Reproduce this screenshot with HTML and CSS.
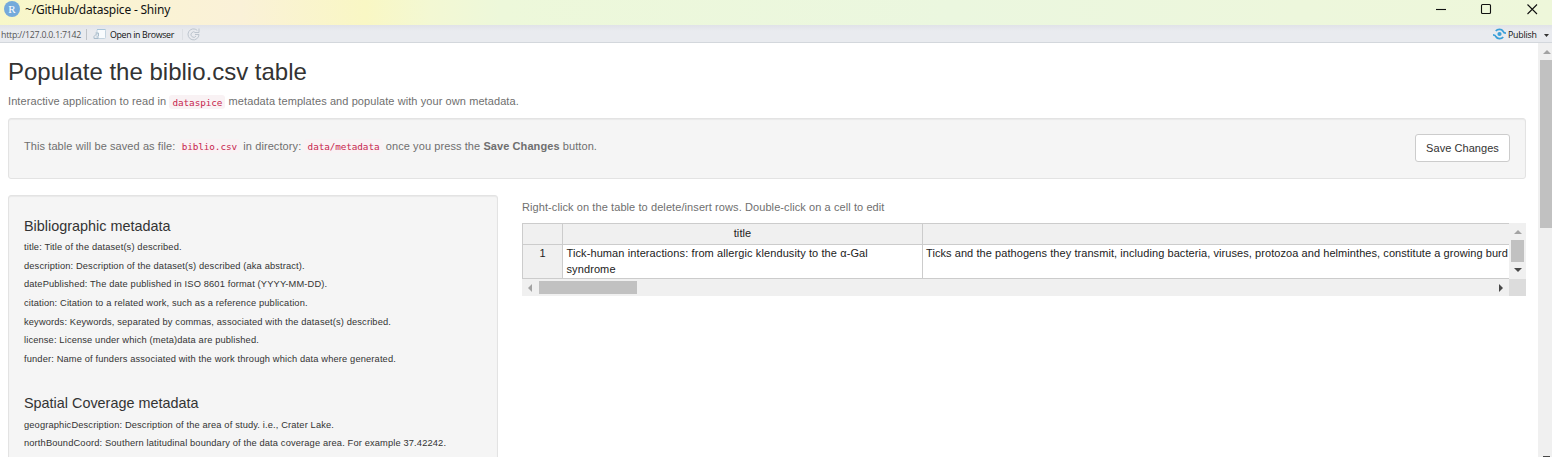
FILE: index.html
```html
<!DOCTYPE html>
<html lang="en">
<head>
<meta charset="utf-8">
<title>~/GitHub/dataspice - Shiny</title>
<link rel="stylesheet" href="styles.css">
</head>
<body>
<header class="titlebar">
  <svg class="rlogo" width="16" height="16" viewBox="0 0 16 16"><circle cx="8" cy="8" r="8" fill="#75aadb"/><text x="8" y="11.500" text-anchor="middle" class="rletter">R</text></svg>
  <span class="wintitle">~/GitHub/dataspice - Shiny</span>
  <svg class="winctl" width="104" height="14" viewBox="0 0 104 14" fill="none" stroke="#111" stroke-width="1.1"><path d="M0 7.500h10"/><rect x="45.500" y="2.500" width="9" height="9" rx="1"/><path d="M91.500 2.500l9.500 9.500M101 2.500l-9.500 9.500"/></svg>
</header>
<nav class="toolbar">
  <span class="url">http://127.0.0.1:7142</span>
  <i class="sep"></i>
  <svg class="open" width="13" height="12" viewBox="0 0 13 12"><rect x="4" y="1.500" width="8.500" height="9" rx="1" fill="#f8fbfd" stroke="#c3d3df"/><path d="M4 1.500h8.500" stroke="#a9c5da"/><path d="M1 10.500V8.500l3-3M1 10.500h4V8M2.500 5h3v3" fill="none" stroke="#a9bccb"/></svg>
  <span class="openlabel">Open in Browser</span>
  <i class="sep faint"></i>
  <svg class="reload" width="13" height="13" viewBox="0 0 13 13" fill="none" stroke="#bdc5ce"><path d="M10.300 2.400A5.500 5.500 0 1 0 12 6.500H8"/><path d="M12 .5v4H8M8.500 4.600A2.700 2.700 0 1 0 9 8"/></svg>
  <svg class="publish-icon" width="13" height="12" viewBox="0 0 13 12" fill="none" stroke="#3a9fd8"><path d="M2.800 3C4.500.8 8.500.6 10 3.200C10.600 4.800 11.500 5.200 13 5.200M10.200 9C8.500 11.200 4.500 11.400 3 8.800C2.400 7.200 1.500 6.800 0 6.800" stroke-width="1.800"/><circle cx="6.500" cy="6" r="2.100" fill="#3a9fd8" stroke="none"/></svg>
  <span class="publabel">Publish</span>
  <svg class="caret" width="5" height="3" viewBox="0 0 5 3"><path d="M0 0h5L2.500 3z" fill="#333"/></svg>
</nav>
<div class="view">
  <main class="page">
    <h1>Populate the biblio.csv table</h1>
    <p class="help intro">Interactive application to read in <code>dataspice</code> metadata templates and populate with your own metadata.</p>
    <section class="well save">
      <p class="help">This table will be saved as file: <code>biblio.csv</code> in directory: <code>data/metadata</code> once you press the <b>Save Changes</b> button.</p>
      <button class="btn">Save Changes</button>
    </section>
    <div class="cols">
      <aside class="well side">
        <h2>Bibliographic metadata</h2>
        <p>title: Title of the dataset(s) described.</p>
        <p>description: Description of the dataset(s) described (aka abstract).</p>
        <p>datePublished: The date published in ISO 8601 format (YYYY-MM-DD).</p>
        <p>citation: Citation to a related work, such as a reference publication.</p>
        <p>keywords: Keywords, separated by commas, associated with the dataset(s) described.</p>
        <p>license: License under which (meta)data are published.</p>
        <p>funder: Name of funders associated with the work through which data where generated.</p>
        <h2 class="second">Spatial Coverage metadata</h2>
        <p>geographicDescription: Description of the area of study. i.e., Crater Lake.</p>
        <p>northBoundCoord: Southern latitudinal boundary of the data coverage area. For example 37.42242.</p>
      </aside>
      <section class="tablearea">
        <p class="help hint">Right-click on the table to delete/insert rows. Double-click on a cell to edit</p>
        <div class="hot">
          <div class="grid">
            <div class="th"></div><div class="th">title</div><div class="th last"></div>
            <div class="th rownum">1</div><div class="td">Tick-human interactions: from allergic klendusity to the α-Gal syndrome</div><div class="td long">Ticks and the pathogens they transmit, including bacteria, viruses, protozoa and helminthes, constitute a growing burd</div>
          </div>
          <div class="vbar">
            <svg width="8" height="4" viewBox="0 0 8 4"><path d="M0 4L4 0l4 4z" fill="#a3a3a3"/></svg>
            <i class="vthumb"></i>
            <svg width="8" height="4" viewBox="0 0 8 4"><path d="M0 0h8L4 4z" fill="#484848"/></svg>
          </div>
          <div class="hbar">
            <svg width="4" height="8" viewBox="0 0 4 8"><path d="M4 0v8L0 4z" fill="#a3a3a3"/></svg>
            <i class="hthumb"></i>
            <svg class="right" width="4" height="8" viewBox="0 0 4 8"><path d="M0 0v8l4-4z" fill="#484848"/></svg>
          </div>
          <div class="corner"></div>
        </div>
      </section>
    </div>
  </main>
  <div class="scroll">
    <svg width="8" height="4" viewBox="0 0 8 4"><path d="M0 4L4 0l4 4z" fill="#a3a3a3"/></svg>
    <i class="thumb"></i>
    <i class="down"></i>
  </div>
</div>
</body>
</html>
```
FILE: styles.css
```css
* { box-sizing: border-box; }
body { margin: 0; width: 1552px; height: 457px; overflow: hidden; background: #fff; color: #333; font-family: "Liberation Sans", Arial, sans-serif; }
h1, h2, p { margin: 0; font-weight: 400; white-space: nowrap; }
svg { display: block; flex: none; }
.titlebar { display: flex; height: 25px; padding: 1px 12px 0 4px; background: linear-gradient(90deg, #f7f7c8 0, #faf3d3 130px, #faf1d8 240px, #f9f7c4 365px, #f3f8d3 430px, #edf8da 500px, #ebf7df 950px, #edf7dc 1300px, #eef7da 100%); }
.rletter { font: 11px "Liberation Serif", serif; fill: #fff; }
.wintitle { margin-left: 5px; font: 12px/18px "Noto Sans", sans-serif; color: #111; letter-spacing: -0.2px; }
.winctl { margin: 1px 0 0 auto; }
.toolbar { display: flex; align-items: center; height: 18px; padding-top: 1px; background: linear-gradient(#e0e2e8, #e9ebef 6px); border-bottom: 1px solid #d3d7dc; font: 8.800px/16px "Open Sans", sans-serif; color: #111; }
.toolbar span { padding-top: 1px; white-space: nowrap; }
.url { width: 86px; color: #555; letter-spacing: -0.25px; }
.toolbar .url { padding-left: 1px; }
.sep { width: 1px; height: 11px; background: #bfc3c8; }
.sep.faint { margin-left: 7px; background: #dcdfe3; }
.open { margin-left: 6px; }
.openlabel { width: 65px; margin-left: 4px; letter-spacing: -0.33px; }
.reload { margin-left: 4px; }
.publish-icon { margin-left: auto; }
.publabel { width: 29px; margin-left: 2px; letter-spacing: -0.2px; }
.caret { margin: 2px 3px 0 7px; }
.view { display: flex; height: 414px; }
.page { width: 1538px; padding: 14px 12px 0 8px; overflow: hidden; }
h1 { height: 30px; font-size: 24px; line-height: 30px; }
.help { color: #6f6f6f; font-size: 11px; line-height: 15px; letter-spacing: 0.085px; }
.intro { margin-top: 7px; height: 24px; }
code { padding: 1.500px 3.200px; border-radius: 3px; background: #f9f2f4; color: #c7254e; font: 9.350px "DejaVu Sans Mono", monospace; letter-spacing: -0.1px; }
.save code { position: relative; top: -1px; }
.well { background: #f5f5f5; border: 1px solid #e3e3e3; border-radius: 3px; box-shadow: inset 0 1px 1px rgba(0,0,0,.05); }
.save { display: flex; justify-content: space-between; height: 61px; padding: 15px 15px 0; }
.save .help { margin-top: 5px; }
.btn { width: 95px; height: 28px; padding: 0; border: 1px solid #ccc; border-radius: 3px; background: #fff; color: #333; font: 11px "Liberation Sans", sans-serif; letter-spacing: 0.05px; }
.cols { display: flex; gap: 24px; margin-top: 16px; }
.side { width: 490px; height: 300px; padding: 20px 15px; }
h2 { font-size: 14.400px; line-height: 21px; height: 22px; }
.second { margin: 24px 0 1px; }
.side p { font-size: 9.300px; line-height: 18.650px; letter-spacing: 0.14px; }
.tablearea { width: 1004px; padding-top: 5px; }
.hot { display: grid; grid-template: 56px 17px / 987px 17px; margin-top: 8px; }
.grid { display: grid; grid-template: 21px 34px / 41px 360px 586px; align-content: start; overflow: hidden; border-top: 1px solid #ccc; font-size: 11px; line-height: 16px; letter-spacing: 0.1px; color: #222; }
.th { background: #f0f0f0; border-right: 1px solid #ccc; border-bottom: 1px solid #ccc; text-align: center; line-height: 19px; }
.th:first-child, .rownum { border-left: 1px solid #ccc; }
.rownum { line-height: 17px; }
.td { padding: 0 7px 0 3.500px; border-right: 1px solid #ccc; border-bottom: 1px solid #ccc; }
.td.long { padding: 0 0 0 3px; white-space: nowrap; letter-spacing: 0.07px; }
.td.long, .th.last { border-right: 0; }
.vbar { display: flex; flex-direction: column; align-items: center; gap: 6px; padding-top: 7px; background: #f0f0f0; }
.vthumb { width: 13px; height: 22px; background: #c1c1c1; }
.hbar { display: flex; align-items: center; padding: 0 6px; background: #f0f0f0; }
.hthumb { width: 98px; height: 13px; margin-left: 7px; background: #c1c1c1; }
.right { margin-left: auto; }
.corner { background: #dcdcdc; }
.scroll { display: flex; flex-direction: column; width: 14px; padding: 7px 0 0 2px; background: #f0f0f0; }
.scroll svg { margin-left: 3px; }
.thumb { height: 168px; margin-top: 6px; background: #c1c1c1; }
.down { width: 7px; height: 1px; margin: auto 0 0 3px; background: #484848; }
```
